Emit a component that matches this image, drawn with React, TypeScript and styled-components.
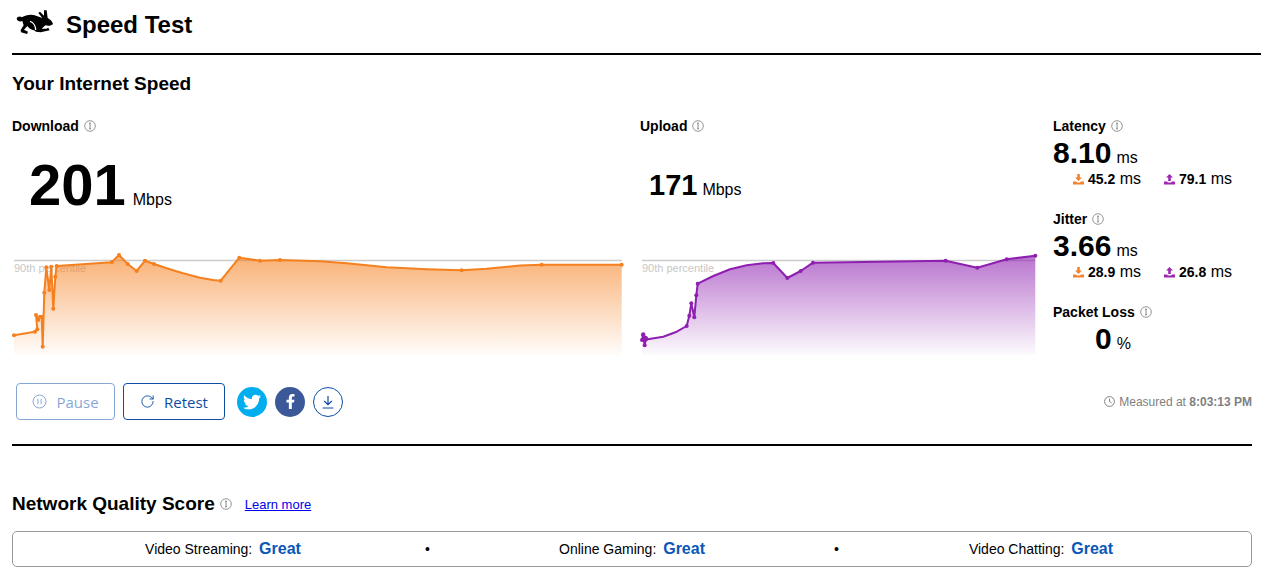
import styled, { createGlobalStyle } from "styled-components";
import { FaTwitter, FaFacebookF } from "react-icons/fa";
import { RotateCw } from "lucide-react";

const GlobalStyle = createGlobalStyle`
  html, body {
    margin: 0;
    padding: 0;
    background: #fff;
    color: #000;
    font-family: "Liberation Sans", Arial, sans-serif;
  }
`;

// x, y, and a 1 where the point only bends the curve and has no dot
type Point = [number, number, number?];

const CHART_TOP = 250;

const downloadPoints: Point[] = [
  [2, 335.3], [23, 331.7], [25.3, 329.3], [24, 315], [26.3, 320], [28, 316.7], [29.7, 316.7],
  [30.7, 346.7], [32.3, 292.7], [34.3, 267.3], [37.3, 290], [39.3, 266.7], [41.3, 308.7],
  [43.3, 276.7], [44.7, 266], [99.7, 262.3], [107, 255], [115.7, 264], [124.7, 271], [133, 260.7],
  [142, 264], [154.7, 268.3, 1], [171, 273.3, 1], [188, 277.7, 1], [201, 280, 1], [208.7, 280.7],
  [227.3, 257.7], [248, 260.7], [268, 260], [308, 261.3, 1], [334.7, 263.3, 1], [374.7, 267.3, 1],
  [414.7, 269.3, 1], [449.7, 270.3], [474.7, 268.7, 1], [508, 265.6, 1], [529.7, 264.7], [609.7, 264.7],
];

const uploadPoints: Point[] = [
  [2, 340], [3.3, 334.3], [6, 338], [4.7, 345.3], [3, 335], [6, 339.5], [23.3, 336.7, 1], [36.7, 331.7, 1],
  [46.7, 326], [49.3, 315.7], [51.3, 303.3], [54.3, 317.3], [56.3, 295.3], [57.7, 283.7],
  [73.3, 276, 1], [90, 269.3, 1], [106.7, 265.3, 1], [123, 263.3, 1], [133.3, 263], [147.3, 278],
  [160.7, 271], [173, 262.7], [305.7, 260.7], [337.3, 267.7], [366.7, 259.3], [395.3, 255.7],
];

const Chart = ({ id, color, points, width }: { id: string; color: string; points: Point[]; width: number }) => {
  const local = points.map(([x, y, hidden]) => [x, y - CHART_TOP, hidden] as Point);
  const line = local.map(([x, y]) => `${x},${y}`).join(" ");
  const lastX = local[local.length - 1][0];
  return (
    <ChartSvg width={width} height={106} viewBox={`0 0 ${width} 106`}>
      <defs>
        <linearGradient id={id} x1="0" y1="0" x2="0" y2="1">
          <stop offset="0" stopColor={color} stopOpacity="0.62" />
          <stop offset="1" stopColor={color} stopOpacity="0.02" />
        </linearGradient>
      </defs>
      <text x="2" y="22" fontSize="11" fill="#c8c8c8" fontFamily="Liberation Sans, Arial, sans-serif">90th percentile</text>
      <line x1="2" x2={lastX} y1="10.5" y2="10.5" stroke="#cccccc" strokeWidth="1.4" />
      <polygon points={`2,105 ${line} ${lastX},105`} fill={`url(#${id})`} />
      <polyline points={line} fill="none" stroke={color} strokeWidth="2" strokeLinejoin="round" />
      {local.filter(([, , hidden]) => !hidden).map(([x, y]) => (
        <circle key={`${x}-${y}`} cx={x} cy={y} r="2" fill={color} />
      ))}
    </ChartSvg>
  );
};

const InfoIcon = () => (
  <InfoSvg width={12} height={12} viewBox="0 0 12 12">
    <circle cx="6" cy="6" r="5.3" fill="none" stroke="#8a8a8a" strokeWidth="0.9" />
    <path d="M5 3.2h2M6 3.2v5.6M5 8.8h2" fill="none" stroke="#8a8a8a" strokeWidth="1" />
  </InfoSvg>
);

const Rabbit = () => (
  <RabbitSvg width="40" height="26" viewBox="12 6 120 78">
    <path
      fill="#000"
      d="M14 38 C16 31 25 30 30 34 C42 26 60 24 74 30 C80 32 86 34 91 36 L79 21 L84 17 L96 29 L96 13 L104 13 L107 36 C115 40 121 47 123 54 C118 60 108 60 100 58 C96 61 93 65 89 68 L103 68 L109 65 L113 73 L86 79 L72 77 L66 73 C58 71 50 66 46 60 L36 71 L48 77 L45 84 L27 79 L26 72 L35 58 C33 52 32 48 31 45 C24 48 16 46 14 38 Z"
    />
    <path d="M54 46 C64 49 71 60 71 72" fill="none" stroke="#fff" strokeWidth="4" />
  </RabbitSvg>
);

const TrayIcon = ({ color, up }: { color: string; up?: boolean }) => (
  <svg width="11" height="11" viewBox="0 0 11 11">
    <path fill={color} d={up ? "M5.5 0 L9 3.6 H6.8 V7 H4.2 V3.6 H2 Z" : "M4.2 0 H6.8 V3.6 H9 L5.5 7 L2 3.6 H4.2 Z"} />
    <path fill={color} d="M0 7.4 H3 L4 8.4 H7 L8 7.4 H11 V10.6 H0 Z" />
  </svg>
);

const SubStats = ({ down, up }: { down: string; up: string }) => (
  <SubRow>
    <SubStat>
      <TrayIcon color="#f5822a" />
      <span><b>{down}</b> ms</span>
    </SubStat>
    <SubStat>
      <TrayIcon color="#9c27b0" up />
      <span><b>{up}</b> ms</span>
    </SubStat>
  </SubRow>
);

export default function App() {
  return (
    <>
      <GlobalStyle />
      <Page>
        <Header>
          <Rabbit />
          <Title>Speed Test</Title>
        </Header>

        <Section>
          <Heading>Your Internet Speed</Heading>
          <Results>
            <ChartColumn $width={628}>
              <Label>Download <InfoIcon /></Label>
              <BigValue>
                <BigNumber>201</BigNumber>
                <Unit>Mbps</Unit>
              </BigValue>
              <Chart id="dl" color="#f5801f" points={downloadPoints} width={612} />
            </ChartColumn>

            <ChartColumn $width={413}>
              <Label>Upload <InfoIcon /></Label>
              <MidValue>
                <MidNumber>171</MidNumber>
                <Unit>Mbps</Unit>
              </MidValue>
              <Chart id="ul" color="#8e1fb0" points={uploadPoints} width={399} />
            </ChartColumn>

            <SideColumn>
              <SideBlock $height={93}>
                <Label>Latency <InfoIcon /></Label>
                <SideValue><SideNumber>8.10</SideNumber><SideUnit>ms</SideUnit></SideValue>
                <SubStats down="45.2" up="79.1" />
              </SideBlock>
              <SideBlock $height={93}>
                <Label>Jitter <InfoIcon /></Label>
                <SideValue><SideNumber>3.66</SideNumber><SideUnit>ms</SideUnit></SideValue>
                <SubStats down="28.9" up="26.8" />
              </SideBlock>
              <SideBlock $height={60}>
                <Label>Packet Loss <InfoIcon /></Label>
                <LossValue><SideNumber>0</SideNumber><SideUnit>%</SideUnit></LossValue>
              </SideBlock>
            </SideColumn>
          </Results>

          <Actions>
            <Buttons>
              <OutlineButton $width={99} $disabled>
                <svg width="15" height="15" viewBox="0 0 15 15">
                  <circle cx="7.5" cy="7.5" r="6.5" fill="none" stroke="currentColor" />
                  <path d="M5.9 4.8v5.4M9.1 4.8v5.4" stroke="currentColor" fill="none" />
                </svg>
                Pause
              </OutlineButton>
              <OutlineButton $width={102}>
                <RotateCw size={15} strokeWidth={1.5} />
                Retest
              </OutlineButton>
              <ShareGroup>
                <RoundIcon $bg="#00aeef"><FaTwitter size={18} color="#fff" /></RoundIcon>
                <RoundIcon $bg="#3b5998"><FaFacebookF size={15} color="#fff" /></RoundIcon>
                <RoundIcon $bg="#fff" $outline>
                  <svg width="14" height="14" viewBox="0 0 14 14">
                    <path d="M7 1v8.4M3.2 6 L7 9.6 L10.8 6M1.5 13h11" fill="none" stroke="#0b4ea2" strokeWidth="1.2" />
                  </svg>
                </RoundIcon>
              </ShareGroup>
            </Buttons>
            <Measured>
              <svg width="11" height="11" viewBox="0 0 11 11">
                <circle cx="5.5" cy="5.5" r="4.9" fill="none" stroke="#808080" />
                <path d="M5.5 2.6v3l2 1.2" fill="none" stroke="#808080" />
              </svg>
              <span>Measured at <b>8:03:13 PM</b></span>
            </Measured>
          </Actions>
        </Section>

        <ScoreSection>
          <ScoreHead>
            <Heading>Network Quality Score</Heading>
            <InfoIcon />
            <LearnMore href="#">Learn more</LearnMore>
          </ScoreHead>
          <ScoreBar>
            <ScoreItem>Video Streaming: <Grade>Great</Grade></ScoreItem>
            <ScoreItem>•</ScoreItem>
            <ScoreItem>Online Gaming: <Grade>Great</Grade></ScoreItem>
            <ScoreItem>•</ScoreItem>
            <ScoreItem>Video Chatting: <Grade>Great</Grade></ScoreItem>
          </ScoreBar>
        </ScoreSection>
      </Page>
    </>
  );
}

const Page = styled.div`
  padding-left: 12px;
  height: 588px;
  box-sizing: border-box;
  overflow: hidden;
`;

const Header = styled.header`
  display: flex;
  align-items: center;
  gap: 10px;
  height: 50px;
  padding: 0 0 3px 4px;
  border-bottom: 2px solid #000;
`;

const RabbitSvg = styled.svg`
  flex: none;
  margin-bottom: 8px;
`;

const Title = styled.h1`
  margin: 0;
  font-size: 24px;
  font-weight: 700;
`;

const Section = styled.section`
  width: 1240px;
  height: 391px;
  box-sizing: border-box;
  border-bottom: 2px solid #000;
  padding-top: 17px;
`;

const Heading = styled.h2`
  margin: 0;
  font-size: 19px;
  line-height: 24px;
  font-weight: 700;
`;

const Results = styled.div`
  display: flex;
  margin-top: 22px;
  height: 238px;
`;

const ChartColumn = styled.div<{ $width: number }>`
  width: ${(p) => p.$width}px;
  flex: none;
  display: flex;
  flex-direction: column;
`;

const ChartSvg = styled.svg`
  display: block;
  flex: none;
  margin-top: auto;
`;

const Label = styled.div`
  display: flex;
  align-items: center;
  gap: 5px;
  font-size: 14px;
  line-height: 16px;
  font-weight: 700;
`;

const InfoSvg = styled.svg`
  flex: none;
`;

const BigValue = styled.div`
  display: flex;
  align-items: baseline;
  gap: 7px;
  padding: 15px 0 0 17px;
`;

const BigNumber = styled.span`
  font-size: 58px;
  line-height: 72px;
  font-weight: 700;
`;

const Unit = styled.span`
  font-size: 16px;
`;

const MidValue = styled.div`
  display: flex;
  align-items: baseline;
  gap: 5px;
  padding: 31px 0 0 9px;
`;

const MidNumber = styled.span`
  font-size: 29px;
  line-height: 40px;
  font-weight: 700;
`;

const SideColumn = styled.div`
  flex: 1;
  display: flex;
  flex-direction: column;
`;

const SideBlock = styled.div<{ $height: number }>`
  height: ${(p) => p.$height}px;
  flex: none;
`;

const SideValue = styled.div`
  display: flex;
  align-items: baseline;
  gap: 5px;
  height: 35px;
  margin-top: 1px;
`;

const LossValue = styled(SideValue)`
  padding-left: 42px;
  margin-top: 1px;
`;

const SideNumber = styled.span`
  font-size: 30px;
  line-height: 36px;
  font-weight: 700;
`;

const SideUnit = styled.span`
  font-size: 16px;
`;

const SubRow = styled.div`
  display: flex;
  gap: 23px;
  padding-left: 20px;
`;

const SubStat = styled.div`
  display: flex;
  align-items: center;
  gap: 4px;
  font-size: 16px;
  line-height: 18px;
  white-space: pre;

  b {
    font-weight: 700;
    font-size: 14px;
  }
`;

const Actions = styled.div`
  display: flex;
  align-items: center;
  justify-content: space-between;
  height: 37px;
  margin-top: 27px;
  padding-left: 4px;
`;

const Buttons = styled.div`
  display: flex;
  align-items: center;
  gap: 8px;
`;

const OutlineButton = styled.button<{ $width: number; $disabled?: boolean }>`
  width: ${(p) => p.$width}px;
  height: 37px;
  display: flex;
  align-items: center;
  justify-content: center;
  gap: 9px;
  background: #fff;
  border-radius: 4px;
  border: 1px solid ${(p) => (p.$disabled ? "#84a7d6" : "#0b4ea2")};
  color: ${(p) => (p.$disabled ? "#88a8d4" : "#0b4ea2")};
  font-family: "Open Sans", sans-serif;
  font-size: 15px;
  padding: 0;
`;

const ShareGroup = styled.div`
  display: flex;
  gap: 8px;
  margin-left: 4px;
`;

const RoundIcon = styled.span<{ $bg: string; $outline?: boolean }>`
  width: 30px;
  height: 30px;
  box-sizing: border-box;
  border-radius: 50%;
  display: flex;
  align-items: center;
  justify-content: center;
  background: ${(p) => p.$bg};
  border: ${(p) => (p.$outline ? "1px solid #0b4ea2" : "none")};
`;

const Measured = styled.div`
  display: flex;
  align-items: center;
  gap: 4px;
  font-size: 12px;
  color: #808080;
  white-space: pre;
`;

const ScoreSection = styled.section`
  width: 1240px;
  padding-top: 46px;
`;

const ScoreHead = styled.div`
  display: flex;
  align-items: center;
  gap: 5px;
`;

const LearnMore = styled.a`
  margin-left: 8px;
  color: #0000ee;
  font-size: 13px;
`;

const ScoreBar = styled.div`
  display: grid;
  grid-template-columns: repeat(5, 204.5px);
  justify-content: center;
  align-items: center;
  height: 36px;
  box-sizing: border-box;
  margin-top: 15px;
  border: 1px solid #999;
  border-radius: 5px;
`;

const ScoreItem = styled.div`
  font-size: 14px;
  text-align: center;
  white-space: pre;
`;

const Grade = styled.b`
  margin-left: 3px;
  font-size: 16px;
  color: #0b57b8;
`;
